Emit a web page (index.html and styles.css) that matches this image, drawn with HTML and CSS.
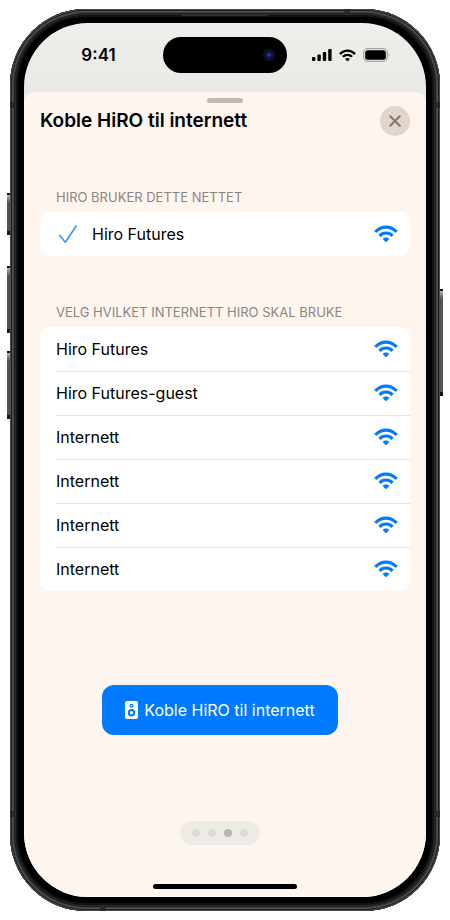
FILE: index.html
```html
<!DOCTYPE html>
<html lang="no">
<head>
    <meta charset="UTF-8">
    <meta name="viewport" content="width=device-width, initial-scale=1.0">
    <title>Koble HiRO til internett</title>
    <link rel="stylesheet" href="styles.css">
</head>
<body>
    <svg class="symbols" aria-hidden="true">
        <symbol id="wifi" viewBox="0 0 24 18">
            <path d="M1.6 6.8 C7.4 0.6 16.6 0.6 22.4 6.8" fill="none" stroke="currentColor" stroke-width="3.1"/>
            <path d="M0.9 5.6 L1.9 7.2 M23.1 5.6 L22.1 7.2" fill="none" stroke="currentColor" stroke-width="1" stroke-linecap="round"/>
            <path d="M5.5 10.8 C9.1 7.1 14.9 7.1 18.5 10.8" fill="none" stroke="currentColor" stroke-width="3.1"/>
            <path d="M9 13.7 C10.4 12.2 13.6 12.2 15 13.7 Q15.3 14.1 14.9 14.5 L12.6 16.8 Q12 17.4 11.4 16.8 L9.1 14.5 Q8.7 14.1 9 13.7 Z" fill="currentColor"/>
        </symbol>
    </svg>
    <div class="phone">
        <span class="side-key action-key"></span>
        <span class="side-key volume-up"></span>
        <span class="side-key volume-down"></span>
        <span class="side-key power-key"></span>
        <span class="antenna left upper"></span>
        <span class="antenna left lower"></span>
        <span class="antenna right upper"></span>
        <span class="antenna right lower"></span>
        <span class="antenna top"></span>
        <span class="antenna bottom"></span>
        <span class="earpiece"></span>
        <div class="screen">
            <header class="status-bar">
                <div class="time">9:41</div>
                <div class="island"><span class="camera"></span></div>
                <div class="indicators">
                    <svg width="20" height="12" viewBox="0 0 20 12">
                        <rect x="0" y="8" width="3.4" height="4" rx="1"/>
                        <rect x="5.4" y="5.5" width="3.4" height="6.5" rx="1"/>
                        <rect x="10.8" y="3" width="3.4" height="9" rx="1"/>
                        <rect x="16.2" y="0" width="3.4" height="12" rx="1"/>
                    </svg>
                    <svg width="17" height="13"><use href="#wifi"/></svg>
                    <svg width="27" height="14" viewBox="0 0 27 14">
                        <rect x="0.7" y="0.7" width="23.6" height="12.6" rx="4" fill="none" stroke="#a9a8a5" stroke-width="1.3"/>
                        <rect x="2.2" y="2.2" width="20.6" height="9.6" rx="2.5"/>
                        <path d="M25.6 5 Q27.3 7 25.6 9 Z" fill="#a9a8a5"/>
                    </svg>
                </div>
            </header>
            <main class="sheet">
                <div class="grabber"></div>
                <div class="title-bar">
                    <h1>Koble HiRO til internett</h1>
                    <button class="close" type="button" aria-label="Lukk">
                        <svg width="12" height="12" viewBox="0 0 12 12"><path d="M1.2 1.2 L10.8 10.8 M10.8 1.2 L1.2 10.8"/></svg>
                    </button>
                </div>
                <section>
                    <h2>HIRO BRUKER DETTE NETTET</h2>
                    <ul class="networks">
                        <li><button class="network connected" type="button">
                            <svg class="check" width="22" height="20" viewBox="0 0 22 20"><path d="M3.6 11.3 L9.3 18.3 L20.2 2"/></svg>
                            <span>Hiro Futures</span><svg class="wifi"><use href="#wifi"/></svg>
                        </button></li>
                    </ul>
                </section>
                <section>
                    <h2>VELG HVILKET INTERNETT HIRO SKAL BRUKE</h2>
                    <ul class="networks">
                        <li><button class="network" type="button"><span>Hiro Futures</span><svg class="wifi"><use href="#wifi"/></svg></button></li>
                        <li><button class="network" type="button"><span>Hiro Futures-guest</span><svg class="wifi"><use href="#wifi"/></svg></button></li>
                        <li><button class="network" type="button"><span>Internett</span><svg class="wifi"><use href="#wifi"/></svg></button></li>
                        <li><button class="network" type="button"><span>Internett</span><svg class="wifi"><use href="#wifi"/></svg></button></li>
                        <li><button class="network" type="button"><span>Internett</span><svg class="wifi"><use href="#wifi"/></svg></button></li>
                        <li><button class="network" type="button"><span>Internett</span><svg class="wifi"><use href="#wifi"/></svg></button></li>
                    </ul>
                </section>
                <div class="actions">
                    <button class="connect" type="button">
                        <svg width="13" height="18" viewBox="0 0 13 18">
                            <rect width="13" height="18" rx="2" fill="#fff"/>
                            <circle cx="6.5" cy="4.7" r="1.4" fill="none" stroke="#007aff" stroke-width="1.2"/>
                            <circle cx="6.5" cy="11.7" r="2.7" fill="none" stroke="#007aff" stroke-width="2"/>
                        </svg>
                        Koble HiRO til internett
                    </button>
                    <div class="pager">
                        <span class="dot"></span>
                        <span class="dot"></span>
                        <span class="dot current"></span>
                        <span class="dot"></span>
                    </div>
                </div>
                <div class="home-indicator"></div>
            </main>
        </div>
    </div>
</body>
</html>
```
FILE: styles.css
```css
* { box-sizing: border-box; }
body { margin: 0; padding: 9px 10px; background: white; color: black; font-family: Inter, "Liberation Sans", sans-serif; }
h1, h2, ul { margin: 0; padding: 0; }
ul { list-style: none; }
button { border: none; margin: 0; padding: 0; background: none; color: inherit; font: inherit; cursor: pointer; }
svg { display: block; flex: none; }
.symbols { position: absolute; width: 0; height: 0; }

.phone { position: relative; padding: 14px; border-radius: 76px; background: black; box-shadow: inset 0 0 0 1px #4a4a4a, inset 0 0 0 2px #202020, inset 0 0 0 3px #505050, inset 0 0 0 4px #444, inset 0 0 0 5px #1c1c1c, inset 0 0 0 6px #2a2a2a, inset 0 0 0 8px #121212; }
.side-key { position: absolute; left: -3px; width: 3px; border: solid #151515; border-width: 2px 0 4px; background: linear-gradient(#b5b3ac, #55534f 8px); }
.action-key { top: 184px; height: 42px; }
.volume-up { top: 257px; height: 67px; }
.volume-down { top: 342px; height: 68px; }
.power-key { top: 280px; left: auto; right: -3px; height: 107px; }
.antenna { position: absolute; width: 5px; height: 6px; background: #26282a; }
.antenna.left { left: 0; }
.antenna.right { right: 0; }
.antenna.upper { top: 93px; }
.antenna.lower { bottom: 94px; }
.antenna.top { top: 0; right: 90px; width: 6px; height: 5px; }
.antenna.bottom { bottom: 0; left: 90px; width: 6px; height: 5px; }
.earpiece { position: absolute; top: 5px; left: 50%; width: 86px; height: 2px; margin-left: -43px; border-radius: 1px; background: #303030; }
.screen { overflow: hidden; border-radius: 64px; background: linear-gradient(#f0eeeb, #eae9e6 69px); }

.status-bar { display: grid; grid-template-columns: 1fr 124px 1fr; align-items: center; padding: 14px 0 19px; }
.time { padding-left: 10px; text-align: center; font-size: 17px; font-weight: 600; line-height: 22px; }
.island { display: flex; align-items: center; justify-content: flex-end; height: 36px; padding-right: 12px; border-radius: 18px; background: black; }
.camera { width: 12px; height: 12px; border-radius: 50%; background: radial-gradient(circle, #2b3aa0 0 10%, #0b0d3c 35%, #10122c 60%, #090810); }
.indicators { display: flex; align-items: center; justify-content: center; gap: 7px; padding-right: 12px; }

.sheet { display: flex; flex-direction: column; border-radius: 10px 10px 0 0; background: #fff5ef; padding: 6px 16px 8px; }
.grabber { align-self: center; width: 36px; height: 5px; border-radius: 3px; background: #c5b8af; }
.title-bar { display: flex; align-items: center; justify-content: space-between; margin: 3px 0 20px; }
h1 { font-size: 19px; font-weight: 600; line-height: 26px; }
.close { display: grid; place-items: center; width: 30px; height: 30px; border-radius: 50%; background: #e1d5cc; }
.close path { stroke: #82776e; stroke-width: 2; stroke-linecap: round; }
section { padding-top: 32px; }
section + section { padding-top: 47px; }
h2 { padding: 0 16px 6px; font-size: 13px; font-weight: 400; line-height: 18px; color: #8b8583; }
.networks { overflow: hidden; border-radius: 10px; background: white; }
.network { display: flex; align-items: center; width: 100%; height: 44px; padding: 0 12px 0 16px; font-size: 16px; line-height: 22px; text-align: left; }
.network span { flex: 1; }
.networks li + li::before { content: ""; display: block; height: 1px; margin: 0 0 -1px 16px; background: #e3e3e4; }
.connected { gap: 14px; }
.check path { fill: none; stroke: #3a95ff; stroke-width: 1.6; stroke-linecap: round; stroke-linejoin: round; }
.wifi { width: 24px; height: 18px; color: #007aff; }

.actions { display: flex; flex-direction: column; align-items: center; gap: 86px; padding: 94px 10px 39px 0; }
.connect { display: flex; align-items: center; gap: 6px; height: 50px; padding: 0 23px; border-radius: 12px; background: #007aff; color: white; font-size: 16px; }
.pager { display: flex; gap: 8px; padding: 8px 12px; border-radius: 12px; background: #eeeae6; }
.dot { width: 8px; height: 8px; border-radius: 50%; background: #dfdbd8; }
.dot.current { background: #bab6b2; }
.home-indicator { align-self: center; width: 144px; height: 5px; border-radius: 3px; background: black; }
```
